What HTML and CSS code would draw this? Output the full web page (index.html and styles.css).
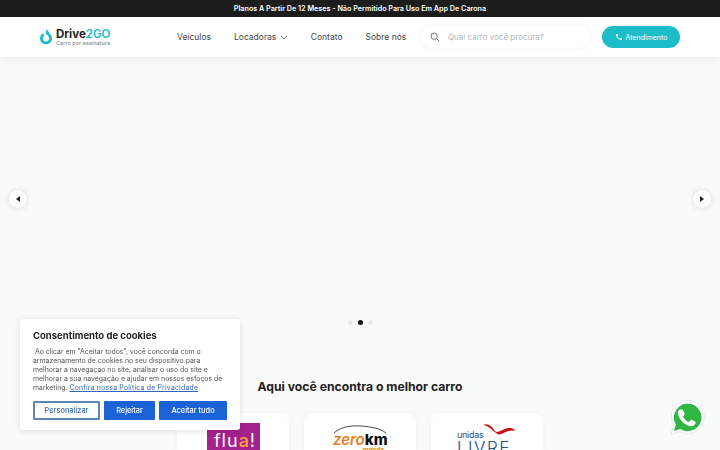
FILE: index.html
```html
<!DOCTYPE html>
<html lang="pt-BR">
<head>
  <meta charset="UTF-8" />
  <meta name="viewport" content="width=device-width, initial-scale=1.0" />
  <title>Drive2GO</title>
  <link rel="stylesheet" href="styles.css">
</head>
<body>
  <div class="topbar">Planos A Partir De 12 Meses - Não Permitido Para Uso Em App De Carona</div>
  <header class="header">
    <a class="logo" href="#">
      <svg class="logo-drop" viewBox="0 0 12 16" width="12" height="16">
        <path d="M6.500 0 L9 3.200 A1.700 1.700 0 1 1 6 3.800 Z" fill="#19bcc8"/>
        <path d="M3.600 5.400 A4.600 4.600 0 1 0 8.400 5.400" fill="none" stroke="#19bcc8" stroke-width="2.800"/>
      </svg>
      <span class="logo-text">
        <span class="logo-name">Drive<em>2GO</em></span>
        <span class="logo-sub">Carro por assinatura</span>
      </span>
    </a>
    <nav class="nav">
      <a href="#">Veículos</a>
      <a href="#" class="nav-drop">Locadoras
        <svg viewBox="0 0 8 5" width="8" height="5"><path d="M1 1 L4 4 L7 1" fill="none" stroke="#555" stroke-width="0.9"/></svg>
      </a>
      <a href="#">Contato</a>
      <a href="#">Sobre nós</a>
    </nav>
    <div class="search">
      <svg viewBox="0 0 12 12" width="10" height="10"><circle cx="5" cy="5" r="3.800" fill="none" stroke="#666" stroke-width="1.100"/><path d="M8 8 L11.200 11.200" stroke="#666" stroke-width="1.200"/></svg>
      <span>Qual carro você procura?</span>
    </div>
    <a class="cta" href="#">
      <svg viewBox="0 0 24 24" width="8" height="8"><path fill="#fff" d="M6.600 10.800c1.400 2.800 3.800 5.100 6.600 6.600l2.200-2.200c.3-.3.700-.4 1-.2 1.100.4 2.300.6 3.600.6.600 0 1 .4 1 1V20c0 .6-.4 1-1 1C10.600 21 3 13.400 3 4c0-.6.400-1 1-1h3.500c.6 0 1 .4 1 1 0 1.300.2 2.500.6 3.600.1.300 0 .7-.2 1z"/></svg>
      Atendimento
    </a>
  </header>

  <section class="hero">
    <button class="arrow arrow-left"><i></i></button>
    <button class="arrow arrow-right"><i></i></button>
    <div class="dots"><span></span><span class="on"></span><span></span></div>
  </section>

  <section class="brands">
    <h2>Aqui você encontra o melhor carro</h2>
    <div class="brand-row">
      <div class="brand-card"><div class="fluo">flu<b>a</b>!</div></div>
      <div class="brand-card">
        <div class="zero">
          <svg viewBox="0 0 54 9" width="54" height="9"><path d="M1 8 C6 3 16 0 28 1 C38 2 47 3 53 8" fill="none" stroke="#333" stroke-width="0.900"/></svg>
          <div class="zero-name"><em>zero</em>km</div>
          <div class="zero-sub">mmida</div>
        </div>
      </div>
      <div class="brand-card">
        <div class="unidas">
          <svg viewBox="0 0 60 20" width="35" height="12"><path d="M2 3 C10 0 16 4 22 13 C27 19 34 10 46 8 C52 8 56 11 58 13 C50 11 40 15 32 19 C24 22 18 6 2 3 Z" fill="#c8141f"/></svg>
          <div class="unidas-top">unidas</div>
          <div class="unidas-big">Livre</div>
        </div>
      </div>
    </div>
  </section>

  <aside class="cookie">
    <h3>Consentimento de cookies</h3>
    <p>&nbsp;Ao clicar em "Aceitar todos", você concorda com o armazenamento de cookies no seu dispositivo para melhorar a navegaçao no site, analisar o uso do site e melhorar a sua navegação e ajudar em nossos esfoços de marketing. <a href="#">Confira nossa Política de Privacidade</a></p>
    <div class="cookie-btns">
      <button class="btn-outline">Personalizar</button>
      <button class="btn-solid btn-reject">Rejeitar</button>
      <button class="btn-solid btn-accept">Aceitar tudo</button>
    </div>
  </aside>

  <a class="whats" href="#">
    <svg viewBox="0 0 36 36" width="36" height="36">
      <path d="M2 34 L4.700 25.500 A16.500 16.500 0 1 1 11 31.500 Z" fill="#fff" stroke="#d8dad8" stroke-width="0.600"/>
      <path d="M4.800 31 L7 24.800 A13.800 13.800 0 1 1 11.300 29.100 Z" fill="#2fb644"/>
      <path fill="#fff" d="M12.900 9.600c.5 0 1 0 1.300.8l1.400 3.300c.2.400.1.700-.1 1l-1.200 1.500c-.2.300-.3.600 0 1 1.100 2 2.900 3.700 5 4.700.4.200.7.100 1-.2l1.400-1.700c.3-.4.600-.4 1-.2l3.300 1.600c.5.200.7.400.7.800 0 2.300-2 4-4.400 4-5.700-.3-12.500-6.300-13.500-13-.2-1.800.9-3.600 2.800-3.600z"/>
    </svg>
  </a>
</body>
</html>
```

FILE: styles.css
```css
* {
  margin: 0;
  padding: 0;
  box-sizing: border-box;
}
html, body {
  height: 450px;
  overflow: hidden;
}
body {
  font-family: 'Inter', 'Liberation Sans', sans-serif;
  background: #f9fafa;
  color: #222;
}
a {
  text-decoration: none;
  color: inherit;
}
.topbar {
  height: 17px;
  background: #1d1d1d;
  color: #fff;
  font-size: 7.200px;
  font-weight: 600;
  line-height: 17px;
  text-align: center;
}
.header {
  position: relative;
  z-index: 2;
  height: 40px;
  background: #fff;
  box-shadow: 0 2px 8px rgba(0, 0, 0, 0.07);
  display: flex;
  align-items: center;
  padding-left: 40px;
}
.logo {
  display: flex;
  align-items: center;
  gap: 4px;
  width: 137px;
}
.logo-text {
  display: flex;
  flex-direction: column;
}
.logo-name {
  font-size: 11.500px;
  font-weight: 700;
  line-height: 12px;
  color: #222;
}
.logo-name em {
  font-style: normal;
  font-weight: 600;
  color: #19bcc8;
}
.logo-sub {
  font-size: 5.400px;
  line-height: 7px;
  letter-spacing: 0.100px;
  color: #777;
}
.nav {
  display: flex;
  gap: 23px;
  font-size: 8.500px;
  line-height: 11px;
  color: #444;
  width: 244px;
}
.nav-drop svg {
  margin-left: 1px;
}
.search {
  width: 169px;
  height: 22px;
  border-radius: 11px;
  background: #fff;
  box-shadow: 0 0 6px rgba(0, 0, 0, 0.06);
  display: flex;
  align-items: center;
  gap: 8px;
  padding-left: 9px;
  font-size: 8px;
  color: #b4b8bc;
}
.cta {
  margin-left: 12px;
  width: 78px;
  height: 22px;
  border-radius: 11px;
  background: #1cbcc8;
  color: #fff;
  font-size: 7px;
  display: flex;
  align-items: center;
  justify-content: center;
  gap: 3px;
}
.hero {
  position: relative;
  height: 283px;
}
.arrow {
  position: absolute;
  top: 133px;
  width: 18px;
  height: 18px;
  border: none;
  border-radius: 50%;
  background: #fff;
  box-shadow: 0 0 6px rgba(0, 0, 0, 0.15);
  display: flex;
  align-items: center;
  justify-content: center;
}
.arrow-left {
  left: 9px;
}
.arrow-right {
  right: 9px;
}
.arrow i {
  width: 0;
  height: 0;
  border-top: 3.500px solid transparent;
  border-bottom: 3.500px solid transparent;
}
.arrow-left i {
  border-right: 4px solid #222;
}
.arrow-right i {
  border-left: 4px solid #222;
}
.dots {
  position: absolute;
  top: 263px;
  left: 348px;
  display: flex;
  gap: 5px;
}
.dots span {
  width: 5px;
  height: 5px;
  border-radius: 50%;
  background: #e9ebeb;
}
.dots .on {
  background: #111;
}
.brands {
  padding-top: 39px;
}
.brands h2 {
  font-size: 12.200px;
  font-weight: 700;
  line-height: 16px;
  text-align: center;
  color: #222;
}
.brand-row {
  margin-top: 18px;
  display: flex;
  justify-content: center;
  gap: 15px;
}
.brand-card {
  width: 112px;
  height: 37px;
  overflow: hidden;
  background: #fff;
  border-radius: 9px 9px 0 0;
  box-shadow: 0 1px 6px rgba(0, 0, 0, 0.04);
  display: flex;
  justify-content: center;
  padding-top: 10px;
}
.fluo {
  width: 53px;
  height: 27px;
  margin-left: 1px;
  background: #a5218c;
  color: #fff;
  font-size: 18px;
  font-weight: 400;
  line-height: 36px;
  letter-spacing: 1px;
  text-indent: 3px;
  text-align: center;
  white-space: nowrap;
}
.fluo b {
  color: #f5a53a;
  font-weight: 500;
}
.zero {
  width: 54px;
  line-height: 1;
}
.zero svg {
  display: block;
  margin-top: 2px;
}
.zero-name {
  font-size: 15px;
  line-height: 12px;
  font-weight: 800;
  white-space: nowrap;
  color: #111;
}
.zero-name em {
  color: #ee7d1c;
  font-weight: 600;
}
.zero-sub {
  margin-top: 1px;
  font-size: 6.500px;
  line-height: 7px;
  font-weight: 700;
  text-align: right;
  padding-right: 3px;
  color: #ee7d1c;
}
.unidas {
  position: relative;
  width: 60px;
}
.unidas svg {
  position: absolute;
  top: 0;
  left: 25px;
}
.unidas-top {
  padding-top: 6px;
  font-size: 9px;
  line-height: 11px;
  letter-spacing: -0.300px;
  color: #1c4f8c;
}
.unidas-big {
  margin-top: -1px;
  font-size: 17px;
  font-weight: 300;
  line-height: 18px;
  letter-spacing: 1.500px;
  text-transform: uppercase;
  color: #1c4f8c;
}
.cookie {
  position: fixed;
  left: 20px;
  top: 319px;
  z-index: 3;
  width: 220px;
  height: 111px;
  background: #fff;
  border-radius: 3px;
  box-shadow: 0 1px 6px rgba(0, 0, 0, 0.12);
  padding: 10px 13px;
}
.cookie h3 {
  font-size: 9.500px;
  font-weight: 700;
  line-height: 13px;
  color: #222;
}
.cookie p {
  margin-top: 5px;
  font-size: 6.900px;
  line-height: 9px;
  color: #555;
}
.cookie p a {
  color: #2f66b8;
  letter-spacing: 0.200px;
  text-decoration: underline;
}
.cookie-btns {
  margin-top: 9px;
  display: flex;
  gap: 4px;
}
.cookie-btns button {
  height: 19px;
  border-radius: 1px;
  font-family: inherit;
  font-size: 7.400px;
  font-weight: 500;
}
.btn-outline {
  width: 67px;
  background: #fff;
  border: 2px solid #5d86b5;
  color: #3a6ab0;
}
.btn-solid {
  background: #1a62d6;
  border: none;
  color: #fff;
}
.btn-reject {
  width: 51px;
}
.btn-accept {
  width: 68px;
}
.whats {
  position: fixed;
  left: 669px;
  top: 400px;
  z-index: 3;
}
```
